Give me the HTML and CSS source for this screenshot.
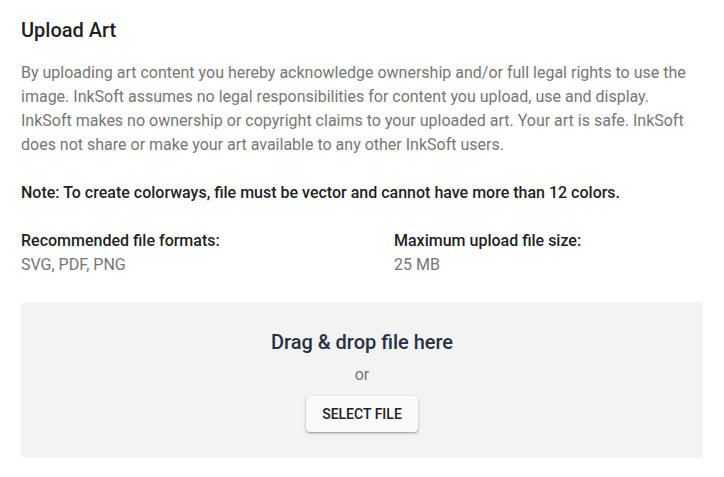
FILE: index.html
```html
<!DOCTYPE html>
<html>
<head>
<meta charset="utf-8">
<link rel="stylesheet" href="styles.css">
</head>
<body>
<div class="page">
  <h1 class="title">Upload Art</h1>
  <p class="disclaimer">By uploading art content you hereby acknowledge ownership and/or full legal rights to use the image. InkSoft assumes no legal responsibilities for content you upload, use and display. InkSoft makes no ownership or copyright claims to your uploaded art. Your art is safe. InkSoft does not share or make your art available to any other InkSoft users.</p>
  <p class="note">Note: To create colorways, file must be vector and cannot have more than 12 colors.</p>
  <div class="info">
    <div class="info-item">
      <div class="info-label">Recommended file formats:</div>
      <div class="info-value">SVG, PDF, PNG</div>
    </div>
    <div class="info-item">
      <div class="info-label">Maximum upload file size:</div>
      <div class="info-value">25 MB</div>
    </div>
  </div>
  <div class="dropzone">
    <div class="drop-title">Drag &amp; drop file here</div>
    <div class="drop-or">or</div>
    <button class="select-btn" type="button">SELECT FILE</button>
  </div>
</div>
</body>
</html>
```
FILE: styles.css
```css
html, body {
  margin: 0;
  padding: 0;
  background: #ffffff;
}
body {
  font-family: Roboto, "Liberation Sans", sans-serif;
  color: #212121;
}
.page {
  padding: 16px 21px 0 21px;
}
.title {
  margin: 0;
  font-size: 20px;
  font-weight: 500;
  line-height: 28px;
  color: #1f1f1f;
}
.disclaimer {
  margin: 17px 0 0 0;
  font-size: 16px;
  line-height: 24px;
  color: #767676;
}
.note {
  margin: 24px 0 0 0;
  font-size: 16px;
  line-height: 24px;
  font-weight: 500;
  color: #1f1f1f;
}
.info {
  display: grid;
  grid-template-columns: 373px 1fr;
  margin-top: 24px;
}
.info-label {
  font-size: 16px;
  font-weight: 500;
  line-height: 24px;
  color: #1f1f1f;
}
.info-value {
  font-size: 16px;
  line-height: 24px;
  color: #767676;
}
.dropzone {
  margin-top: 25px;
  height: 156px;
  background: #f3f3f3;
  border-radius: 4px;
  display: flex;
  flex-direction: column;
  align-items: center;
  box-sizing: border-box;
  padding-top: 26px;
}
.drop-title {
  font-size: 20px;
  font-weight: 500;
  line-height: 28px;
  color: #273142;
}
.drop-or {
  margin-top: 7px;
  font-size: 16px;
  line-height: 24px;
  color: #767676;
}
.select-btn {
  margin-top: 9px;
  width: 112px;
  height: 36px;
  border: none;
  border-radius: 4px;
  background: #fafafa;
  box-shadow: 0 1px 3px rgba(0,0,0,0.3), 0 1px 1px rgba(0,0,0,0.12);
  font-family: Roboto, "Liberation Sans", sans-serif;
  font-size: 14px;
  font-weight: 500;
  color: #212121;
  padding: 0;
  cursor: pointer;
}
```
